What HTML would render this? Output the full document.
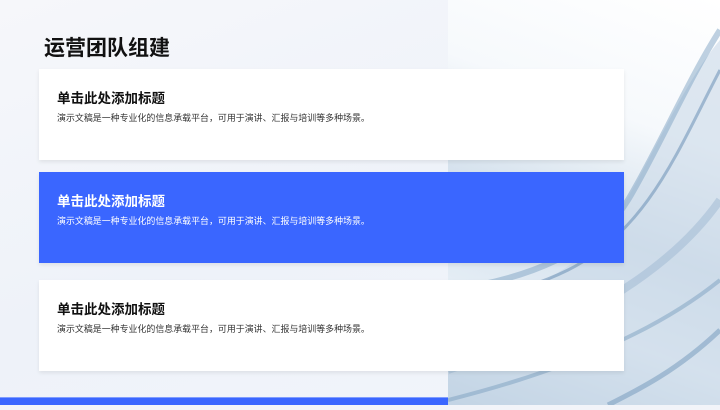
<!DOCTYPE html>
<html><head><meta charset="utf-8"><style>
*{margin:0;padding:0;box-sizing:border-box}
body{width:720px;height:405px;overflow:hidden;position:relative;background:#f2f4f9;font-family:"Liberation Sans","Noto Sans CJK SC",sans-serif}
.left{position:absolute;left:0;top:0;width:448px;height:405px;background:linear-gradient(160deg,#f6f7fa,#eef2f9 60%,#f1f4fa)}
.right{position:absolute;left:448px;top:0;width:272px;height:405px;background:linear-gradient(200deg,#ffffff 0%,#f6f9fc 30%,#d3e0ec 55%,#e4edf5 75%,#b8cde0 100%)}
h1{position:absolute;left:44px;top:32px;font-size:21px;font-weight:bold;color:#111}
.card{position:absolute;left:39px;width:585px;height:91px;background:#fff;box-shadow:0 2px 4px rgba(0,0,0,.08)}
.card h2{position:absolute;left:18px;top:18px;font-size:13.5px;font-weight:bold;color:#111}
.card p{position:absolute;left:18px;top:42px;font-size:8.95px;color:#333;white-space:nowrap}
.blue{background:#3a66ff}
.blue h2,.blue p{color:#fff}
.bar{position:absolute;left:0;top:397px;width:448px;height:8px;background:#3a66ff;border-top:1px solid #7f9cff}
</style></head><body>
<div class="left"></div>
<div class="right">
<svg width="272" height="405" viewBox="0 0 272 405">
<path d="M272 40 C230 90 200 170 160 230 C130 270 60 300 0 330 L0 405 L272 405Z" fill="#c9d9e8" opacity=".6"/>
<path d="M272 30 C240 80 210 150 180 200 C150 250 80 280 0 290" stroke="#7fa3c4" stroke-width="6" fill="none" opacity=".5"/>
<path d="M272 70 C230 150 200 230 120 270 C80 290 30 300 0 310" stroke="#5f87b0" stroke-width="3" fill="none" opacity=".5"/>
<path d="M272 200 C230 260 150 320 0 370" stroke="#9db8d2" stroke-width="8" fill="none" opacity=".5"/>
<path d="M272 280 C210 330 120 370 0 400" stroke="#7c9fc0" stroke-width="4" fill="none" opacity=".5"/>
<path d="M272 330 C230 370 190 390 160 405" stroke="#6f95ba" stroke-width="5" fill="none" opacity=".5"/>
</svg>
</div>
<h1>运营团队组建</h1>
<div class="card" style="top:69px"><h2>单击此处添加标题</h2><p>演示文稿是一种专业化的信息承载平台，可用于演讲、汇报与培训等多种场景。</p></div>
<div class="card blue" style="top:172px"><h2>单击此处添加标题</h2><p>演示文稿是一种专业化的信息承载平台，可用于演讲、汇报与培训等多种场景。</p></div>
<div class="card" style="top:280px"><h2>单击此处添加标题</h2><p>演示文稿是一种专业化的信息承载平台，可用于演讲、汇报与培训等多种场景。</p></div>
<div class="bar"></div>
</body></html>
